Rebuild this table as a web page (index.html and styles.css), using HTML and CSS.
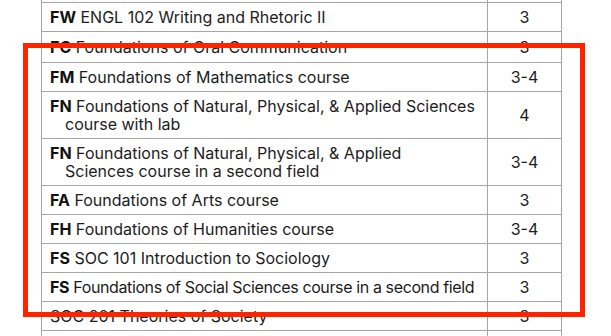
FILE: index.html
```html
<!DOCTYPE html>
<html>
<head>
<meta charset="utf-8">
<link rel="stylesheet" href="styles.css">
</head>
<body>
<div class="page">
  <table class="req">
    <colgroup><col class="c1"><col class="c2"></colgroup>
    <tr class="stub"><td></td><td></td></tr>
    <tr><td class="name"><b>FW</b> ENGL 102 Writing and Rhetoric II</td><td class="cr">3</td></tr>
    <tr class="tall1"><td class="name"><b>FC</b> Foundations of Oral Communication</td><td class="cr">3</td></tr>
    <tr><td class="name"><b>FM</b> Foundations of Mathematics course</td><td class="cr">3-4</td></tr>
    <tr><td class="name"><b>FN</b> Foundations of Natural, Physical, &amp; Applied Sciences<br>course with lab</td><td class="cr">4</td></tr>
    <tr><td class="name"><b>FN</b> Foundations of Natural, Physical, &amp; Applied<br>Sciences course in a second field</td><td class="cr">3-4</td></tr>
    <tr><td class="name"><b>FA</b> Foundations of Arts course</td><td class="cr">3</td></tr>
    <tr><td class="name"><b>FH</b> Foundations of Humanities course</td><td class="cr">3-4</td></tr>
    <tr><td class="name"><b>FS</b> SOC 101 Introduction to Sociology</td><td class="cr">3</td></tr>
    <tr><td class="name tight"><b>FS</b> Foundations of Social Sciences course in a second field</td><td class="cr">3</td></tr>
    <tr><td class="name">SOC 201 Theories of Society</td><td class="cr">3</td></tr>
    <tr><td class="name">&nbsp;</td><td class="cr">&nbsp;</td></tr>
  </table>
  <div class="highlight"></div>
</div>
</body>
</html>
```
FILE: styles.css
```css
html, body {
  margin: 0;
  padding: 0;
  background: #ffffff;
}
.page {
  position: relative;
  width: 611px;
  height: 336px;
  overflow: hidden;
  padding-left: 41px;
  box-sizing: border-box;
}
.req {
  border-collapse: collapse;
  table-layout: fixed;
  width: 520px;
  font-family: Inter, "Noto Sans", sans-serif;
  font-size: 16px;
  line-height: 18px;
  color: #1c1c1c;
}
.req col.c1 {
  width: 446px;
}
.req col.c2 {
  width: 74px;
}
.req td {
  border: 1px solid #a6a6a6;
  padding: 5px 6px 5px 23px;
  text-indent: -15px;
  vertical-align: middle;
  white-space: nowrap;
}
.req td.tight {
  letter-spacing: -0.38px;
}
.req td.cr {
  padding: 5px 4px;
  text-indent: 0;
  text-align: center;
}
.req tr.stub td {
  height: 2px;
  padding: 0;
  border-top: none;
}
.req tr.tall1 td {
  padding-top: 6px;
  padding-bottom: 6px;
}
.req b {
  font-weight: 700;
  color: #111;
}
.highlight {
  position: absolute;
  left: 23px;
  top: 43px;
  width: 552px;
  height: 264px;
  border: 5px solid #ff2400;
}
```
